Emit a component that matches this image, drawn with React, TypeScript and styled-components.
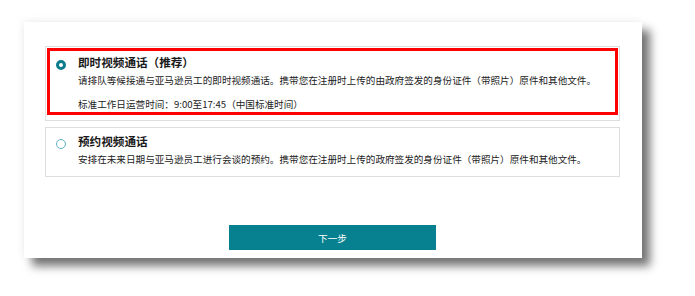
import React from "react";
import styled, { createGlobalStyle } from "styled-components";

const Global = createGlobalStyle`
  html, body { margin: 0; padding: 0; background: #ffffff; }
  body { font-family: "Noto Sans CJK SC", "Noto Sans", sans-serif; color: #222; }
`;

const Page = styled.div`
  padding: 22px 53px 0 24px;
  width: 695px;
  height: 296px;
  box-sizing: border-box;
`;

const Card = styled.div`
  width: 618px;
  height: 236px;
  box-sizing: border-box;
  background: #fff;
  padding: 24px 22px 0 21px;
  box-shadow: 8px 8px 9px rgba(0, 0, 0, 0.55), -2px -2px 8px rgba(0, 0, 0, 0.05);
  display: flex;
  flex-direction: column;
`;

const Options = styled.div`
  display: flex;
  flex-direction: column;
  gap: 6px;
`;

const OptionBox = styled.div`
  border: 1px solid #dedede;
`;

const Highlight = styled.div<{ $on?: boolean }>`
  border: 3px solid ${(p) => (p.$on ? "#ff0000" : "transparent")};
  margin: ${(p) => (p.$on ? "1px 1px 5px 1px" : "0")};
  padding: ${(p) => (p.$on ? "4px 8px 1px 6px" : "3px 8px 7px 7px")};
  display: flex;
  align-items: flex-start;
`;

const Radio = styled.span<{ $checked?: boolean }>`
  flex: none;
  box-sizing: border-box;
  width: 10px;
  height: 10px;
  border-radius: 50%;
  margin-top: 5px;
  margin-right: 12px;
  border: ${(p) => (p.$checked ? "3px solid #0a7c8c" : "1.5px solid #5cb3c4")};
  background: #fff;
`;

const Body = styled.div`
  display: flex;
  flex-direction: column;
`;

const Title = styled.div`
  font-size: 11.6px;
  line-height: 14px;
  font-weight: 700;
  color: #1a1a1a;
  white-space: nowrap;
`;

const Desc = styled.div<{ $gap?: number }>`
  font-size: 9.6px;
  line-height: 14px;
  color: #222;
  white-space: nowrap;
  margin-top: ${(p) => p.$gap ?? 4}px;
`;

const Footer = styled.div`
  margin-top: 48px;
  display: flex;
  justify-content: center;
`;

const NextButton = styled.button`
  width: 207px;
  height: 25px;
  border: none;
  background: #07808f;
  color: #fff;
  font-family: "Noto Sans CJK SC", "Noto Sans", sans-serif;
  font-size: 9.6px;
  padding: 0;
  cursor: pointer;
`;

export default function App() {
  return (
    <>
      <Global />
      <Page>
        <Card>
          <Options>
            <OptionBox>
              <Highlight $on>
                <Radio $checked />
                <Body>
                  <Title>即时视频通话（推荐）</Title>
                  <Desc>
                    请排队等候接通与亚马逊员工的即时视频通话。携带您在注册时上传的由政府签发的身份证件（带照片）原件和其他文件。
                  </Desc>
                  <Desc $gap={10}>标准工作日运营时间：9:00至17:45（中国标准时间）</Desc>
                </Body>
              </Highlight>
            </OptionBox>
            <OptionBox>
              <Highlight>
                <Radio />
                <Body>
                  <Title>预约视频通话</Title>
                  <Desc>
                    安排在未来日期与亚马逊员工进行会谈的预约。携带您在注册时上传的政府签发的身份证件（带照片）原件和其他文件。
                  </Desc>
                </Body>
              </Highlight>
            </OptionBox>
          </Options>
          <Footer>
            <NextButton>下一步</NextButton>
          </Footer>
        </Card>
      </Page>
    </>
  );
}
